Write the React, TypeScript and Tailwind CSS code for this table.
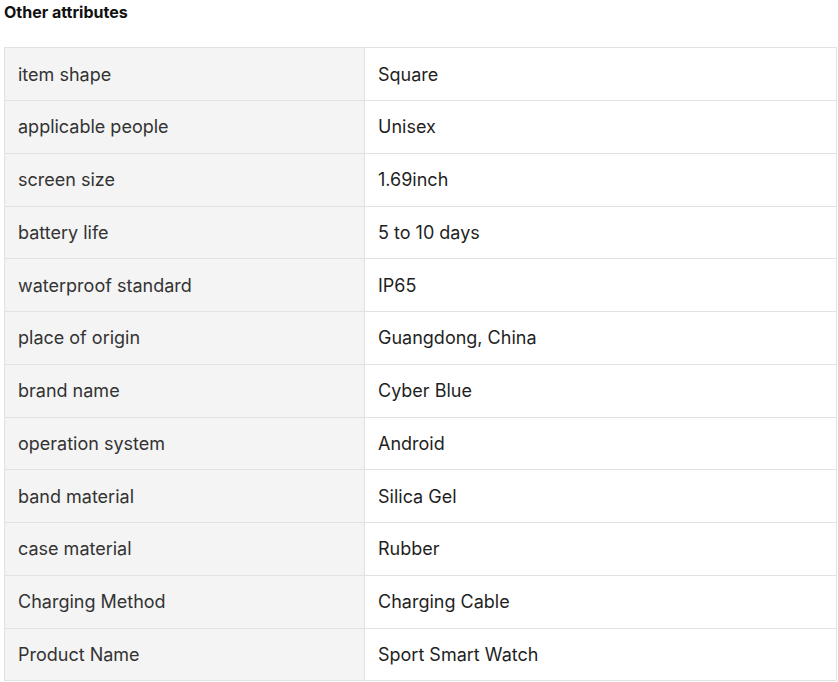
const rows: [string, string][] = [
  ["item shape", "Square"],
  ["applicable people", "Unisex"],
  ["screen size", "1.69inch"],
  ["battery life", "5 to 10 days"],
  ["waterproof standard", "IP65"],
  ["place of origin", "Guangdong, China"],
  ["brand name", "Cyber Blue"],
  ["operation system", "Android"],
  ["band material", "Silica Gel"],
  ["case material", "Rubber"],
  ["Charging Method", "Charging Cable"],
  ["Product Name", "Sport Smart Watch"],
];

export default function App() {
  return (
    <div className="w-[838px] h-[682px] bg-white overflow-hidden" style={{ fontFamily: "Inter, 'Noto Sans', sans-serif" }}>
      <div className="pl-[4px] pt-[2px] h-[47px] text-[16px] leading-[20px] font-bold text-[#111]">Other attributes</div>
      <div className="ml-[4px] w-[833px] border border-[#e2e2e2]">
        {rows.map(([k, v], i) => (
          <div key={i} className={`grid grid-cols-[360px_1fr] ${i > 0 ? "h-[52.75px] border-t border-[#e2e2e2]" : "h-[52px]"}`}>
            <div className="bg-[#f4f4f4] border-r border-[#e2e2e2] flex items-center pl-[13px] text-[18px] text-[#333]">{k}</div>
            <div className="flex items-center pl-[13px] text-[18px] text-[#1f1f1f]">{v}</div>
          </div>
        ))}
      </div>
    </div>
  );
}
